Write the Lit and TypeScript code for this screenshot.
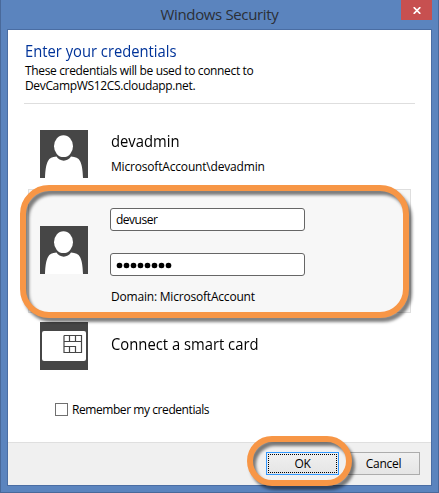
import { LitElement, html, css } from "lit";
import { customElement } from "lit/decorators.js";

const person = html`<svg class="tile" width="48" height="48" viewBox="0 0 48 48">
  <rect width="48" height="48" fill="#464646" />
  <path d="M5 48 C5.3 40 6 35 8 31 C9.5 28 12 26.9 16.500 26.600 C19.500 32 28 32 31 26.600 C35.500 26.900 38.500 28 40 31 C42 35 42.700 40 43 48 Z" fill="#fff" />
  <ellipse cx="23.500" cy="16.200" rx="9.500" ry="10.900" fill="#fff" />
</svg>`;

const card = html`<svg class="tile" width="48" height="48" viewBox="0 0 48 48">
  <rect width="48" height="48" fill="#464646" />
  <rect x="2" y="9" width="44" height="30" rx="2" fill="#fff" />
  <path d="M24 13.500H41.500V30.500H24V13.500M24 19.500H41.500M29.500 13.500V19.500M35.500 13.500V19.500M24 24.500H35.500V30.500M29.500 24.500V30.500" fill="none" stroke="#464646" stroke-width="1.200" />
</svg>`;

@customElement("app-root")
export class AppRoot extends LitElement {
  static styles = css`
    :host { display: block; width: 439px; height: 493px; font: 12px/15px "Open Sans", "Noto Sans", sans-serif; color: #000; }
    * { box-sizing: border-box; }
    .window { position: relative; display: flex; flex-direction: column; height: 493px; padding: 0 6px 6px; background: #5b84be; border: 1px solid #49699a; border-top: 0; overflow: hidden; white-space: nowrap; }
    .titlebar { display: flex; height: 29px; flex: none; }
    .caption { flex: 1; padding: 4px 0 0 31px; text-align: center; font-size: 15px; line-height: 20px; letter-spacing: -0.36px; color: #2b2f36; }
    .close { width: 31px; height: 20px; background: #c75050; display: grid; place-items: center; }
    .client { flex: 1; display: flex; flex-direction: column; border: 1px solid #4a6da3; background: #fff; }
    .head { height: 74px; margin: 0 16px; padding-top: 11px; border-bottom: 1px solid #dedede; }
    h1 { margin: 0 0 2px 1px; font-size: 16px; line-height: 20px; font-weight: 400; color: #003399; transform: scaleX(.922); transform-origin: 0 0; }
    .head p { margin: 0; padding-left: 1px; letter-spacing: -0.345px; }
    .row { display: flex; gap: 23px; padding-left: 32px; }
    .tile { display: block; flex: none; }
    .first { padding-top: 26px; height: 85px; }
    .big { font-size: 16px; line-height: 22px; transform: scaleX(.925); transform-origin: 0 0; }
    .sub { margin-top: 7px; letter-spacing: -0.18px; }
    .panel { height: 124px; width: 383px; margin-left: 20px; padding: 18px 0 0 11px; border: 1px solid #dedede; background: #f7f7f7; }
    .panel .tile { margin-top: 18px; }
    .fields { margin-left: -1px; }
    .field { width: 195px; height: 23px; border: 1px solid #666; border-radius: 3px; background: #fff; padding: 3px 5px; margin-bottom: 22px; letter-spacing: -0.5px; }
    .password { display: flex; gap: 2px; align-items: center; padding: 2px 6px 0; }
    .dot { width: 5px; height: 5px; border-radius: 50%; background: #000; box-shadow: 0 0 0 .3px #000; }
    .domain { margin: -9px 0 0 1px; letter-spacing: -0.2px; }
    .card { margin-top: 9px; }
    .card .big { padding-top: 11px; }
    .check { display: flex; gap: 4px; margin: 32px 0 0 47px; letter-spacing: -0.43px; }
    .box { width: 13px; height: 13px; border: 1px solid #707070; margin-top: 1px; }
    .footer { margin-top: auto; height: 43px; border-top: 1px solid #dfdfdf; background: #f0f0f0; display: flex; gap: 8px; justify-content: flex-end; padding: 9px 11px; }
    .button { width: 73px; height: 23px; border: 1px solid #acacac; background: linear-gradient(#f0f0f0, #e5e5e5); text-align: center; line-height: 21px; letter-spacing: -0.3px; }
    .ok { border-color: #3399ff; padding: 1px; }
    .ok span { display: block; height: 19px; border: 1px dotted #000; line-height: 17px; }
    .ring { position: absolute; border: 6px solid #f79646; filter: drop-shadow(3px 4px 1.800px rgba(0, 0, 0, .5)); }
    .account { left: 18.600px; top: 185px; width: 389.400px; height: 133px; border-radius: 29px; }
    .confirm { left: 246.400px; top: 436px; width: 104.600px; height: 50px; border-radius: 26px; }
  `;

  render() {
    return html`<div class="window">
      <div class="titlebar">
        <div class="caption">Windows Security</div>
        <div class="close"><svg width="8" height="7" viewBox="0 0 8 7"><path d="M.7 .2L7.300 6.800M7.300 .2L.7 6.800" stroke="#fff" stroke-width="1.700" /></svg></div>
      </div>
      <div class="client">
        <div class="head">
          <h1>Enter your credentials</h1>
          <p>These credentials will be used to connect to<br />DevCampWS12CS.cloudapp.net.</p>
        </div>
        <div class="row first">${person}
          <div><div class="big">devadmin</div><div class="sub">MicrosoftAccount\\devadmin</div></div>
        </div>
        <div class="row panel">${person}
          <div class="fields">
            <div class="field">devuser</div>
            <div class="field password">${Array.from({ length: 8 }, () => html`<i class="dot"></i>`)}</div>
            <div class="domain">Domain: MicrosoftAccount</div>
          </div>
        </div>
        <div class="row card">${card}<div class="big">Connect a smart card</div></div>
        <div class="check"><span class="box"></span><span>Remember my credentials</span></div>
        <div class="footer">
          <div class="button ok"><span>OK</span></div>
          <div class="button">Cancel</div>
        </div>
      </div>
      <div class="ring account"></div>
      <div class="ring confirm"></div>
    </div>`;
  }
}
